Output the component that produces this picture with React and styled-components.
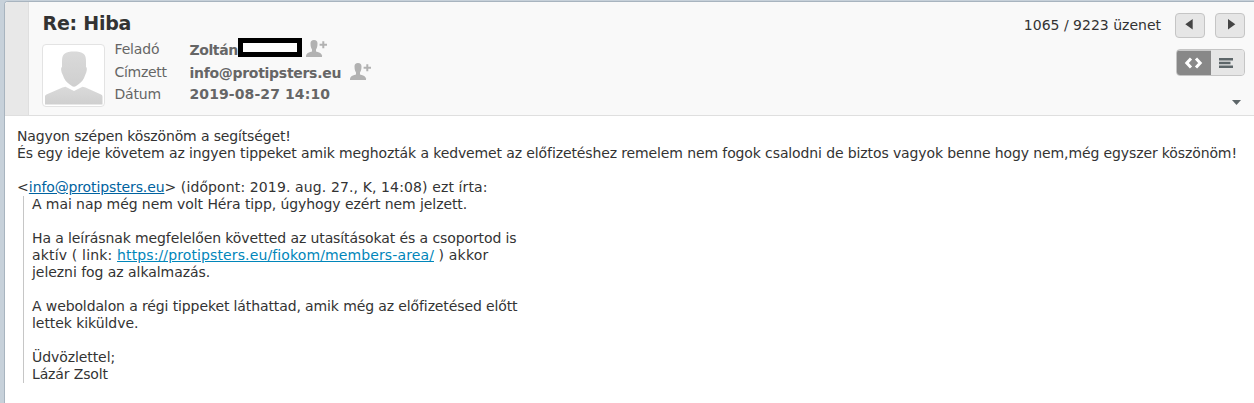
import styled, { createGlobalStyle } from "styled-components";

const GlobalStyle = createGlobalStyle`
  * {
    box-sizing: border-box;
  }
  body {
    margin: 0;
    background-color: #c7d1da;
    font-family: Verdana, "DejaVu Sans", sans-serif;
    font-size: 14px;
    line-height: 17px;
    color: #333;
  }
`;

const Page = styled.div`
  height: 403px;
  padding: 1px 0 0 4px;
  overflow: hidden;
`;

const Panel = styled.div`
  height: 100%;
  background-color: white;
  border-top: 1px solid #a8b4bf;
  border-left: 1px solid #a8b4bf;
  border-radius: 4px 0 0 0;
  overflow: hidden;
`;

const Header = styled.header`
  display: flex;
  height: 114px;
  background-color: #f9f9f9;
  border-bottom: 1px solid #dfdfdf;
`;

const Handle = styled.div`
  width: 24px;
  background-color: #e8e8e8;
  border-right: 1px solid #dfdfdf;
`;

const Summary = styled.div`
  flex: 1;
  padding: 9px 0 0 13px;
`;

const Subject = styled.h2`
  margin: 0;
  padding-left: 0.5px;
  font-size: 19px;
  line-height: 24px;
  letter-spacing: -0.25px;
  white-space: nowrap;
`;

const Details = styled.div`
  display: flex;
  gap: 9.5px;
`;

const Photo = styled.div`
  width: 63px;
  height: 63px;
  margin-top: 9px;
  background-color: white;
  border: 1px solid #e3e3e3;
  border-radius: 4px;

  svg {
    display: block;
  }
`;

const Fields = styled.div`
  padding-top: 6px;
`;

const Field = styled.div`
  display: flex;
  height: ${(props) => props.$height}px;
  color: #666;
`;

const Label = styled.span`
  width: 75px;
  letter-spacing: ${(props) => props.$spacing}px;
`;

const Value = styled.span`
  padding-top: ${(props) => props.$drop}px;
  font-weight: bold;
  letter-spacing: ${(props) => props.$spacing}px;
  white-space: nowrap;
`;

const Redacted = styled.span`
  width: 64px;
  height: 19px;
  margin-top: -3px;
  background-color: white;
  border: 5px solid black;
`;

const AddContact = styled.svg`
  width: 22px;
  height: 17px;
  margin-top: -1px;
  margin-left: ${(props) => props.$gap}px;
`;

const Controls = styled.div`
  display: flex;
  flex-direction: column;
  align-items: flex-end;
  padding: 11px 9px 0 0;
`;

const Pager = styled.div`
  display: flex;
  align-items: center;
  height: 25px;
`;

const Count = styled.span`
  margin-right: 14px;
`;

const PageButton = styled.button`
  display: flex;
  width: 30px;
  height: 25px;
  margin-left: ${(props) => props.$gap}px;
  padding: 0;
  background-color: #e6e6e6;
  border: 1px solid #c5c5c5;
  border-radius: 4px;

  svg {
    display: block;
  }
`;

const Modes = styled.div`
  display: flex;
  width: 69px;
  height: 27px;
  margin-top: 11px;
  background-color: #e6e6e6;
  border: 1px solid #c5c5c5;
  border-radius: 4px;
  overflow: hidden;
`;

const Mode = styled.div`
  width: ${(props) => (props.$active ? 34 : 33)}px;
  height: 25px;
  background-color: ${(props) => (props.$active ? "#888" : "#e6e6e6")};
  border-top: 1px solid ${(props) => (props.$active ? "#c9c9c9" : "#e6e6e6")};

  svg {
    display: block;
  }
`;

const Toggle = styled.svg`
  width: 9px;
  height: 5px;
  margin: 24px 4px 0 0;
`;

const Message = styled.div`
  padding: 12px 0 0 12px;
`;

const Line = styled.div`
  height: 17px;
  letter-spacing: ${(props) => props.$spacing || 0}px;
  white-space: nowrap;
`;

const Quote = styled.blockquote`
  margin: 0 0 0 6px;
  padding-left: 8px;
  border-left: 1px solid #c6c6c6;
`;

const Link = styled.a`
  color: ${(props) => props.$color};
  letter-spacing: ${(props) => props.$spacing}px;
  text-decoration: underline;
`;

const AddContactIcon = ({ gap }) => (
  <AddContact $gap={gap} viewBox="0 0 22 17" fill="#b2b2b2">
    <path d="M8 0c2.500 0 3.500 1.500 3.500 3.500 0 2.500-.5 4.500-1.500 6V12H6V9.500c-1-1.500-1.500-3.500-1.500-6C4.500 1.500 5.500 0 8 0z" />
    <path d="M0 17v-1.500Q.5 12.500 6 11.500h4q5.500 1 6 4V17z" />
    <path d="M16.300 1.200h2v2.500H21v2h-2.700v2.500h-2V5.700h-2.700v-2h2.700z" />
  </AddContact>
);

const Portrait = () => (
  <svg width="61" height="61" viewBox="0 0 61 61">
    <defs>
      <linearGradient id="portrait" x1="0" y1="0" x2="0" y2="1">
        <stop offset="0" stopColor="#dadada" />
        <stop offset="1" stopColor="#cfcfcf" />
      </linearGradient>
    </defs>
    <path
      fill="url(#portrait)"
      d="M31 6.500c4 0 7.500.6 9.800 2.500 1.700 1.500 2.200 4 2.200 7.500v5.500c1.300.5 1.200 4-.8 8-1.200 4.500-4 7.500-7 9.500-1.500 1.200-2.700 2.200-4.200 2.200s-2.700-1-4.200-2.200c-3-2-5.800-5-7-9.500-2-4-2.100-7.500-.8-8v-5.500c0-3.500.5-6 2.200-7.500C23.500 7.100 27 6.500 31 6.500z"
    />
    <path
      fill="url(#portrait)"
      d="M2 59.500v-7.500c0-1.500.5-2.200 2-2.800l15.500-6.700 3-.7L31 46l8.500-4.200 3 .7L57.500 49.200c1.500.6 2 1.300 2 2.800v7.500z"
    />
  </svg>
);

const App = () => {
  return (
    <>
      <GlobalStyle />
      <Page>
        <Panel>
          <Header>
            <Handle />
            <Summary>
              <Subject>Re: Hiba</Subject>
              <Details>
                <Photo>
                  <Portrait />
                </Photo>
                <Fields>
                  <Field $height={23}>
                    <Label $spacing={-0.15}>Feladó</Label>
                    <Value $drop={1} $spacing={-0.4}>
                      Zoltán
                    </Value>
                    <Redacted />
                    <AddContactIcon gap={4.5} />
                  </Field>
                  <Field $height={22}>
                    <Label $spacing={-0.3}>Címzett</Label>
                    <Value $drop={1} $spacing={-0.29}>
                      info@protipsters.eu
                    </Value>
                    <AddContactIcon gap={9} />
                  </Field>
                  <Field $height={22}>
                    <Label $spacing={-0.2}>Dátum</Label>
                    <Value $drop={0} $spacing={0.1}>
                      2019-08-27 14:10
                    </Value>
                  </Field>
                </Fields>
              </Details>
            </Summary>
            <Controls>
              <Pager>
                <Count>1065 / 9223 üzenet</Count>
                <PageButton $gap={0}>
                  <svg width="28" height="23" fill="#444">
                    <path d="M16.700 5v10.500L9.300 10.300z" />
                  </svg>
                </PageButton>
                <PageButton $gap={10}>
                  <svg width="28" height="23" fill="#444">
                    <path d="M12 5v10.500l7.300-5.200z" />
                  </svg>
                </PageButton>
              </Pager>
              <Modes>
                <Mode $active>
                  <svg width="34" height="24" fill="none" stroke="white" strokeWidth="3">
                    <path d="M14 7.500L9.800 12l4.200 4.500M19 7.500l4.200 4.500-4.200 4.500" />
                  </svg>
                </Mode>
                <Mode>
                  <svg width="33" height="24" fill="#5d6669">
                    <path d="M8 7h14v2.500H8zM8 10.800h11.500v2.400H8zM8 14.500h14V17H8z" />
                  </svg>
                </Mode>
              </Modes>
              <Toggle viewBox="0 0 9 5" fill="#5d6669">
                <path d="M0 0h9L4.500 5z" />
              </Toggle>
            </Controls>
          </Header>
          <Message>
            <Line $spacing={-0.14}>Nagyon szépen köszönöm a segítséget!</Line>
            <Line $spacing={-0.117}>
              És egy ideje követem az ingyen tippeket amik meghozták a kedvemet az előfizetéshez remelem nem fogok csalodni de
              biztos vagyok benne hogy nem,még egyszer köszönöm!
            </Line>
            <Line />
            <Line $spacing={0.12}>
              &lt;
              <Link $color="#0063a0" $spacing={-0.12}>
                info@protipsters.eu
              </Link>
              &gt; (időpont: 2019. aug. 27., K, 14:08) ezt írta:
            </Line>
            <Quote>
              <Line $spacing={-0.08}>A mai nap még nem volt Héra tipp, úgyhogy ezért nem jelzett.</Line>
              <Line />
              <Line $spacing={-0.105}>Ha a leírásnak megfelelően követted az utasításokat és a csoportod is</Line>
              <Line $spacing={0.17}>
                aktív ( link:{" "}
                <Link $color="#0186ba" $spacing={0.12}>
                  https://protipsters.eu/fiokom/members-area/
                </Link>{" "}
                ) akkor
              </Line>
              <Line $spacing={-0.05}>jelezni fog az alkalmazás.</Line>
              <Line />
              <Line $spacing={-0.115}>A weboldalon a régi tippeket láthattad, amik még az előfizetésed előtt</Line>
              <Line $spacing={-0.06}>lettek kiküldve.</Line>
              <Line />
              <Line $spacing={-0.08}>Üdvözlettel;</Line>
              <Line $spacing={-0.13}>Lázár Zsolt</Line>
            </Quote>
          </Message>
        </Panel>
      </Page>
    </>
  );
};

export default App;
